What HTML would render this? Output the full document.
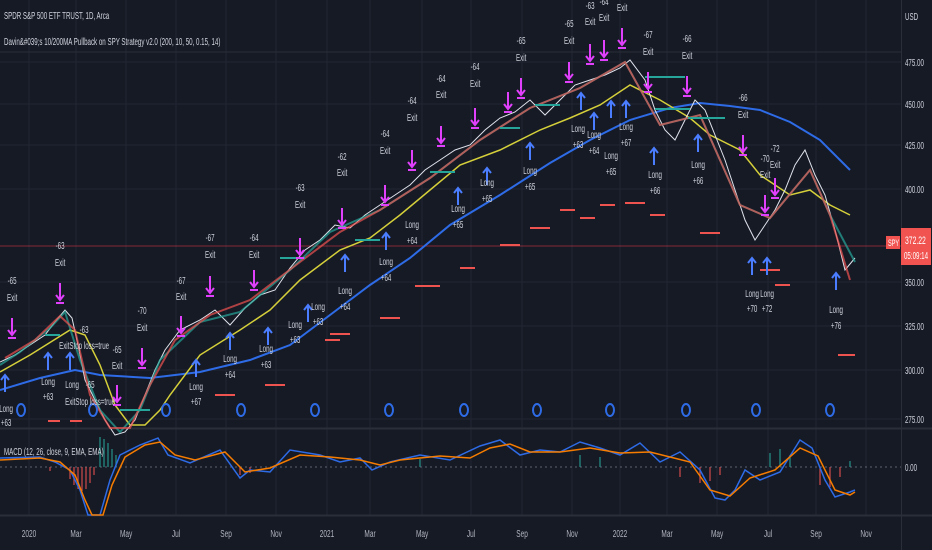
<!DOCTYPE html>
<html><head><meta charset="utf-8"><style>
html,body{margin:0;padding:0;background:#161a25;}
body{width:932px;height:550px;overflow:hidden;font-family:"Liberation Sans",sans-serif;}
svg{display:block}
text{font-family:"Liberation Sans Narrow","Liberation Sans",sans-serif;fill:#d1d4dc;transform-box:fill-box;transform-origin:center;transform:scaleX(.62);}
text.l{transform-origin:left center;}
</style></head><body>
<svg width="932" height="550" viewBox="0 0 932 550" xmlns="http://www.w3.org/2000/svg">
<rect width="932" height="550" fill="#161a25"/>
<g stroke="#222633" stroke-width="1">
<line x1="0" y1="62" x2="901" y2="62"/><line x1="0" y1="104" x2="901" y2="104"/><line x1="0" y1="145" x2="901" y2="145"/><line x1="0" y1="189" x2="901" y2="189"/><line x1="0" y1="282" x2="901" y2="282"/><line x1="0" y1="326" x2="901" y2="326"/><line x1="0" y1="370" x2="901" y2="370"/><line x1="0" y1="419" x2="901" y2="419"/>
<line x1="29" y1="0" x2="29" y2="515"/><line x1="76" y1="0" x2="76" y2="515"/><line x1="126" y1="0" x2="126" y2="515"/><line x1="176" y1="0" x2="176" y2="515"/><line x1="226" y1="0" x2="226" y2="515"/><line x1="276" y1="0" x2="276" y2="515"/><line x1="327" y1="0" x2="327" y2="515"/><line x1="370" y1="0" x2="370" y2="515"/><line x1="422" y1="0" x2="422" y2="515"/><line x1="471" y1="0" x2="471" y2="515"/><line x1="522" y1="0" x2="522" y2="515"/><line x1="572" y1="0" x2="572" y2="515"/><line x1="620" y1="0" x2="620" y2="515"/><line x1="667" y1="0" x2="667" y2="515"/><line x1="717" y1="0" x2="717" y2="515"/><line x1="768" y1="0" x2="768" y2="515"/><line x1="816" y1="0" x2="816" y2="515"/><line x1="866" y1="0" x2="866" y2="515"/>
</g>
<line x1="0" y1="52" x2="901" y2="52" stroke="#2a2e39"/>
<line x1="0" y1="428.5" x2="932" y2="428.5" stroke="#2a2e39" stroke-width="2"/>
<line x1="0" y1="515.5" x2="932" y2="515.5" stroke="#2a2e39" stroke-width="2"/>
<line x1="901.5" y1="0" x2="901.5" y2="550" stroke="#2a2e39"/>
<line x1="0" y1="246" x2="901" y2="246" stroke="#f23645" stroke-width="1" opacity=".5"/>
<polyline fill="none" stroke="#2e6be6" stroke-width="2" points="0,390 40,378 75,370 100,375 150,378 200,372 250,360 290,345 330,315 370,285 410,258 450,225 500,195 550,163 590,140 630,120 670,108 700,103 730,106 760,110 790,122 820,140 850,170"/>
<polyline fill="none" stroke="#d4cf3a" stroke-width="1.5" points="0,372 30,355 70,330 85,335 100,365 115,405 130,425 145,425 160,410 170,395 200,355 240,330 270,310 300,280 340,250 370,238 400,215 430,190 460,165 500,150 540,130 570,118 600,105 630,85 660,100 690,118 710,135 740,150 760,175 790,195 810,190 830,205 850,215"/>
<polyline fill="none" stroke="#e0e3eb" stroke-width="1" points="0,362 15,355 30,345 45,335 55,322 65,310 72,318 78,345 85,380 95,400 105,420 115,435 125,432 135,420 145,395 155,370 165,350 180,330 200,320 215,310 230,325 245,308 260,295 275,290 290,268 305,250 320,240 335,225 350,228 365,215 380,205 395,195 410,185 425,170 440,160 455,150 470,145 485,130 500,118 515,112 530,100 545,115 560,100 575,85 590,80 605,75 620,68 630,60 645,80 655,110 665,130 675,140 685,120 695,100 705,110 715,135 725,160 735,190 745,220 755,240 765,225 775,210 785,190 795,165 805,150 815,175 825,195 835,230 845,270 855,258"/>
<polyline fill="none" stroke="#26a69a" stroke-width="2" opacity=".7" points="0,365 20,352 50,328 65,312 80,360 100,410 120,432 140,410 160,360 200,322 240,312 290,270 330,232 380,210 430,178 480,140 530,108 580,88 625,62 660,125 700,115 740,205 770,218 810,170 830,215 855,262"/>
<polyline fill="none" stroke="#ef5350" stroke-width="2" opacity=".7" points="5,358 35,340 60,316 75,330 90,395 110,428 130,428 150,385 175,340 210,315 250,300 300,262 340,232 380,210 430,178 480,140 530,108 580,88 625,62 660,125 700,115 740,205 770,218 810,170 830,215 850,280"/>
<g stroke="#26a69a" stroke-width="2">
<line x1="120" y1="410" x2="150" y2="410"/><line x1="45" y1="335" x2="60" y2="335"/><line x1="280" y1="258" x2="305" y2="258"/><line x1="355" y1="240" x2="380" y2="240"/><line x1="430" y1="172" x2="455" y2="172"/><line x1="500" y1="128" x2="520" y2="128"/><line x1="535" y1="105" x2="560" y2="105"/><line x1="645" y1="77" x2="685" y2="77"/><line x1="655" y1="109" x2="690" y2="109"/><line x1="688" y1="118" x2="725" y2="118"/>
</g>
<g stroke="#ef5350" stroke-width="2">
<line x1="48" y1="421" x2="60" y2="421"/><line x1="70" y1="421" x2="82" y2="421"/><line x1="215" y1="395" x2="235" y2="395"/><line x1="265" y1="385" x2="285" y2="385"/><line x1="325" y1="340" x2="340" y2="340"/><line x1="330" y1="334" x2="350" y2="334"/><line x1="380" y1="318" x2="400" y2="318"/><line x1="415" y1="286" x2="440" y2="286"/><line x1="460" y1="268" x2="475" y2="268"/><line x1="500" y1="245" x2="520" y2="245"/><line x1="530" y1="228" x2="550" y2="228"/><line x1="560" y1="210" x2="575" y2="210"/><line x1="580" y1="218" x2="595" y2="218"/><line x1="600" y1="205" x2="615" y2="205"/><line x1="625" y1="203" x2="645" y2="203"/><line x1="650" y1="215" x2="665" y2="215"/><line x1="700" y1="233" x2="720" y2="233"/><line x1="760" y1="270" x2="780" y2="270"/><line x1="775" y1="285" x2="790" y2="285"/><line x1="838" y1="355" x2="855" y2="355"/>
</g>
<g fill="none" stroke="#2e6be6" stroke-width="2">
<ellipse cx="21" cy="410" rx="4" ry="6"/><ellipse cx="93" cy="410" rx="4" ry="6"/><ellipse cx="166" cy="410" rx="4" ry="6"/><ellipse cx="241" cy="410" rx="4" ry="6"/><ellipse cx="315" cy="410" rx="4" ry="6"/><ellipse cx="389" cy="410" rx="4" ry="6"/><ellipse cx="464" cy="410" rx="4" ry="6"/><ellipse cx="537" cy="410" rx="4" ry="6"/><ellipse cx="610" cy="410" rx="4" ry="6"/><ellipse cx="686" cy="410" rx="4" ry="6"/><ellipse cx="756" cy="410" rx="4" ry="6"/><ellipse cx="830" cy="410" rx="4" ry="6"/>
</g>
<g stroke="#e040fb" stroke-width="2" fill="none">
<path d="M12 318v16M8 330l4 5 4-5M8 338h8"/><path d="M60 283v16M56 295l4 5 4-5M56 303h8"/><path d="M142 348v16M138 360l4 5 4-5M138 368h8"/><path d="M117 385v16M113 397l4 5 4-5M113 405h8"/><path d="M181 316v16M177 328l4 5 4-5M177 336h8"/><path d="M210 276v16M206 288l4 5 4-5M206 296h8"/><path d="M254 270v16M250 282l4 5 4-5M250 290h8"/><path d="M300 238v16M296 250l4 5 4-5M296 258h8"/><path d="M342 208v16M338 220l4 5 4-5M338 228h8"/><path d="M385 185v16M381 197l4 5 4-5M381 205h8"/><path d="M412 150v16M408 162l4 5 4-5M408 170h8"/><path d="M441 126v16M437 138l4 5 4-5M437 146h8"/><path d="M475 108v16M471 120l4 5 4-5M471 128h8"/><path d="M508 92v16M504 104l4 5 4-5M504 112h8"/><path d="M521 78v16M517 90l4 5 4-5M517 98h8"/><path d="M569 62v16M565 74l4 5 4-5M565 82h8"/><path d="M590 44v16M586 56l4 5 4-5M586 64h8"/><path d="M604 40v16M600 52l4 5 4-5M600 60h8"/><path d="M622 28v16M618 40l4 5 4-5M618 48h8"/><path d="M648 72v16M644 84l4 5 4-5M644 92h8"/><path d="M687 76v16M683 88l4 5 4-5M683 96h8"/><path d="M743 135v16M739 147l4 5 4-5M739 155h8"/><path d="M765 195v16M761 207l4 5 4-5M761 215h8"/><path d="M775 178v16M771 190l4 5 4-5M771 198h8"/>
</g>
<g stroke="#4a7dff" stroke-width="2" fill="none">
<path d="M5 392v-16M1 380l4-5 4 5"/><path d="M48 370v-16M44 358l4-5 4 5"/><path d="M70 370v-16M66 358l4-5 4 5"/><path d="M196 377v-16M192 365l4-5 4 5"/><path d="M230 350v-16M226 338l4-5 4 5"/><path d="M268 345v-16M264 333l4-5 4 5"/><path d="M308 322v-16M304 310l4-5 4 5"/><path d="M345 272v-16M341 260l4-5 4 5"/><path d="M386 250v-16M382 238l4-5 4 5"/><path d="M458 205v-16M454 193l4-5 4 5"/><path d="M487 185v-16M483 173l4-5 4 5"/><path d="M530 160v-16M526 148l4-5 4 5"/><path d="M581 110v-16M577 98l4-5 4 5"/><path d="M594 130v-16M590 118l4-5 4 5"/><path d="M611 118v-16M607 106l4-5 4 5"/><path d="M626 118v-16M622 106l4-5 4 5"/><path d="M654 165v-16M650 153l4-5 4 5"/><path d="M698 152v-16M694 140l4-5 4 5"/><path d="M752 275v-16M748 263l4-5 4 5"/><path d="M767 275v-16M763 263l4-5 4 5"/><path d="M836 290v-16M832 278l4-5 4 5"/>
</g>
<g font-size="10" text-anchor="middle">
<text x="12" y="284">-65</text><text x="12" y="301">Exit</text>
<text x="60" y="249">-63</text><text x="60" y="266">Exit</text>
<text x="142" y="314">-70</text><text x="142" y="331">Exit</text>
<text x="117" y="353">-65</text><text x="117" y="369">Exit</text>
<text x="181" y="284">-67</text><text x="181" y="300">Exit</text>
<text x="210" y="241">-67</text><text x="210" y="258">Exit</text>
<text x="254" y="241">-64</text><text x="254" y="258">Exit</text>
<text x="300" y="191">-63</text><text x="300" y="208">Exit</text>
<text x="342" y="160">-62</text><text x="342" y="176">Exit</text>
<text x="385" y="137">-64</text><text x="385" y="154">Exit</text>
<text x="412" y="104">-64</text><text x="412" y="121">Exit</text>
<text x="441" y="82">-64</text><text x="441" y="98">Exit</text>
<text x="475" y="70">-64</text><text x="475" y="87">Exit</text>
<text x="521" y="44">-65</text><text x="521" y="61">Exit</text>
<text x="569" y="27">-65</text><text x="569" y="44">Exit</text>
<text x="590" y="9">-63</text><text x="590" y="25">Exit</text>
<text x="604" y="5">-64</text><text x="604" y="21">Exit</text>
<text x="622" y="11">Exit</text>
<text x="648" y="38">-67</text><text x="648" y="55">Exit</text>
<text x="687" y="42">-66</text><text x="687" y="59">Exit</text>
<text x="743" y="101">-66</text><text x="743" y="118">Exit</text>
<text x="765" y="162">-70</text><text x="765" y="178">Exit</text>
<text x="775" y="152">-72</text><text x="775" y="168">Exit</text>
<text x="84" y="333">-63</text><text x="84" y="349">ExitStop loss=true</text>
<text x="90" y="388">-65</text><text x="90" y="405">ExitStop loss=true</text>
<text x="6" y="412">Long</text><text x="6" y="426">+63</text>
<text x="48" y="385">Long</text><text x="48" y="400">+63</text>
<text x="72" y="388">Long</text>
<text x="196" y="390">Long</text><text x="196" y="405">+67</text>
<text x="230" y="362">Long</text><text x="230" y="378">+64</text>
<text x="266" y="352">Long</text><text x="266" y="368">+63</text>
<text x="295" y="328">Long</text><text x="295" y="343">+63</text>
<text x="318" y="310">Long</text><text x="318" y="325">+63</text>
<text x="345" y="294">Long</text><text x="345" y="310">+64</text>
<text x="386" y="265">Long</text><text x="386" y="281">+64</text>
<text x="412" y="228">Long</text><text x="412" y="244">+64</text>
<text x="458" y="212">Long</text><text x="458" y="228">+65</text>
<text x="487" y="186">Long</text><text x="487" y="202">+65</text>
<text x="530" y="174">Long</text><text x="530" y="190">+65</text>
<text x="578" y="132">Long</text><text x="578" y="148">+63</text>
<text x="594" y="138">Long</text><text x="594" y="154">+64</text>
<text x="611" y="159">Long</text><text x="611" y="175">+65</text>
<text x="626" y="130">Long</text><text x="626" y="146">+67</text>
<text x="655" y="178">Long</text><text x="655" y="194">+66</text>
<text x="698" y="168">Long</text><text x="698" y="184">+66</text>
<text x="752" y="297">Long</text><text x="752" y="312">+70</text>
<text x="767" y="297">Long</text><text x="767" y="312">+72</text>
<text x="836" y="313">Long</text><text x="836" y="329">+76</text>
</g>
<text class="l" x="4" y="19" font-size="10">SPDR S&amp;P 500 ETF TRUST, 1D, Arca</text>
<text class="l" x="4" y="45" font-size="10">Davin&amp;#039;s 10/200MA Pullback on SPY Strategy v2.0 (200, 10, 50, 0.15, 14)</text>
<line x1="0" y1="467" x2="901" y2="467" stroke="#787b86" stroke-dasharray="2,3" stroke-width=".8"/>
<g stroke-width="1.3">
<path d="M100 467v-30M104 467v-28M108 467v-24M112 467v-18M116 467v-12M420 467v-8M580 467v-12M600 467v-10M770 467v-14M780 467v-18M790 467v-12M850 467v-6" stroke="#26a69a" opacity=".8"/>
<path d="M50 467v4M70 467v12M74 467v18M78 467v22M82 467v24M86 467v22M90 467v16M94 467v8M240 467v8M250 467v6M680 467v10M700 467v16M710 467v14M720 467v8M820 467v18M830 467v20M840 467v10" stroke="#ef5350" opacity=".8"/>
</g>
<text class="l" x="4" y="455" font-size="10">MACD (12, 26, close, 9, EMA, EMA)</text>
<polyline fill="none" stroke="#2e6be6" stroke-width="1.5" points="0,458 40,457 55,462 70,470 80,490 88,515 100,515 110,480 120,455 140,445 158,438 168,455 190,463 220,450 240,478 250,470 270,472 290,450 320,455 340,462 360,458 372,470 390,462 420,455 450,460 480,446 500,440 520,455 540,450 560,452 580,442 600,448 620,455 640,443 660,462 680,452 700,470 715,498 725,500 735,490 745,470 760,480 780,472 800,440 812,448 825,480 835,497 850,492 855,490"/>
<polyline fill="none" stroke="#f57c00" stroke-width="1.5" points="0,460 40,458 60,462 75,475 85,500 92,515 103,515 112,485 125,457 145,445 160,442 175,455 195,460 225,452 245,472 270,468 300,455 330,457 360,460 380,465 400,460 440,456 470,458 490,448 510,444 530,452 560,452 590,448 620,453 650,452 670,457 690,462 710,490 730,496 750,478 775,470 800,448 818,456 835,490 850,495 855,492"/>
<g font-size="10" fill="#b2b5be">
<text class="l" x="905" y="20">USD</text>
<text class="l" x="905" y="66">475.00</text><text class="l" x="905" y="108">450.00</text><text class="l" x="905" y="149">425.00</text><text class="l" x="905" y="193">400.00</text><text class="l" x="905" y="286">350.00</text><text class="l" x="905" y="330">325.00</text><text class="l" x="905" y="374">300.00</text><text class="l" x="905" y="423">275.00</text><text class="l" x="905" y="471">0.00</text>
</g>
<rect x="886" y="236" width="14" height="13" fill="#f05350"/>
<text class="l" x="888" y="246" font-size="9" fill="#fff" style="fill:#fff">SPY</text>
<rect x="901" y="228" width="30" height="37" fill="#f05350"/>
<text class="l" x="905" y="244" font-size="11" style="fill:#fff">372.22</text>
<text class="l" x="904" y="259" font-size="10" style="fill:#fff">05:09:14</text>
<g font-size="10.5" text-anchor="middle">
<text x="29" y="537" style="fill:#b2b5be">2020</text><text x="76" y="537" style="fill:#b2b5be">Mar</text><text x="126" y="537" style="fill:#b2b5be">May</text><text x="176" y="537" style="fill:#b2b5be">Jul</text><text x="226" y="537" style="fill:#b2b5be">Sep</text><text x="276" y="537" style="fill:#b2b5be">Nov</text><text x="327" y="537" style="fill:#b2b5be">2021</text><text x="370" y="537" style="fill:#b2b5be">Mar</text><text x="422" y="537" style="fill:#b2b5be">May</text><text x="471" y="537" style="fill:#b2b5be">Jul</text><text x="522" y="537" style="fill:#b2b5be">Sep</text><text x="572" y="537" style="fill:#b2b5be">Nov</text><text x="620" y="537" style="fill:#b2b5be">2022</text><text x="667" y="537" style="fill:#b2b5be">Mar</text><text x="717" y="537" style="fill:#b2b5be">May</text><text x="768" y="537" style="fill:#b2b5be">Jul</text><text x="816" y="537" style="fill:#b2b5be">Sep</text><text x="866" y="537" style="fill:#b2b5be">Nov</text>
</g>
</svg>
</body></html>
